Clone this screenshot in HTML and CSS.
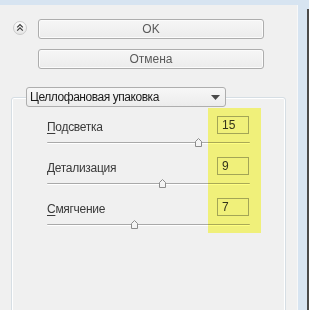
FILE: index.html
```html
<!DOCTYPE html>
<html lang="ru">
<head>
<meta charset="utf-8">
<link rel="stylesheet" href="styles.css">
</head>
<body>
<div class="window">
  <div class="panel">
    <div class="top">
      <div class="collapse">
        <svg width="14" height="14" viewBox="0 0 14 14">
          <defs>
            <linearGradient id="cg" x1="0" y1="0" x2="0" y2="1">
              <stop offset="0" stop-color="#ffffff"/>
              <stop offset="1" stop-color="#e4e4e4"/>
            </linearGradient>
          </defs>
          <circle cx="7" cy="7" r="6.5" fill="url(#cg)" stroke="#cacaca"/>
          <polyline points="4.2,6.3 7,3.5 9.8,6.3" fill="none" stroke="#3a3a3a" stroke-width="1.2"/>
          <polyline points="4.2,9.6 7,6.8 9.8,9.6" fill="none" stroke="#3a3a3a" stroke-width="1.2"/>
        </svg>
      </div>
      <div class="buttons">
        <div class="btn">OK</div>
        <div class="btn">Отмена</div>
      </div>
    </div>
    <fieldset class="group">
      <legend class="legend">
        <div class="combo">
          <span class="combo-text">Целлофановая упаковка</span>
          <svg class="combo-arrow" width="9" height="5" viewBox="0 0 9 5"><polygon points="0,0 9,0 4.5,5" fill="#4a4a4a"/></svg>
        </div>
      </legend>
      <div class="sliders">
        <div class="row">
          <div class="head">
            <span class="label"><u>П</u>одсветка</span>
            <span class="num">15</span>
          </div>
          <div class="slider">
            <div class="line"></div>
            <svg class="thumb" style="left: 74.4%" width="7" height="9" viewBox="0 0 7 9"><path d="M3.5 0.5 L6.5 3.5 L6.5 8.5 L0.5 8.5 L0.5 3.5 Z" fill="#f4f4f4" stroke="#8c8c8c"/></svg>
          </div>
        </div>
        <div class="row">
          <div class="head">
            <span class="label"><u>Д</u>етализация</span>
            <span class="num">9</span>
          </div>
          <div class="slider">
            <div class="line"></div>
            <svg class="thumb" style="left: 56.7%" width="7" height="9" viewBox="0 0 7 9"><path d="M3.5 0.5 L6.5 3.5 L6.5 8.5 L0.5 8.5 L0.5 3.5 Z" fill="#f4f4f4" stroke="#8c8c8c"/></svg>
          </div>
        </div>
        <div class="row">
          <div class="head">
            <span class="label"><u>С</u>мягчение</span>
            <span class="num">7</span>
          </div>
          <div class="slider">
            <div class="line"></div>
            <svg class="thumb" style="left: 42.9%" width="7" height="9" viewBox="0 0 7 9"><path d="M3.5 0.5 L6.5 3.5 L6.5 8.5 L0.5 8.5 L0.5 3.5 Z" fill="#f4f4f4" stroke="#8c8c8c"/></svg>
          </div>
        </div>
      </div>
    </fieldset>
  </div>
  <div class="frame"></div>
  <div class="edge"></div>
  <div class="highlight"></div>
</div>
</body>
</html>
```

FILE: styles.css
```css
html, body {
  margin: 0;
  padding: 0;
}

body {
  font-family: "Liberation Sans", Arial, sans-serif;
  font-size: 12px;
  color: #222;
}

.window {
  position: relative;
  display: flex;
  width: 309px;
  height: 310px;
  box-sizing: border-box;
  padding-top: 5px;
  background: #d7e4f1;
  overflow: hidden;
}

.panel {
  width: 298px;
  flex: none;
  box-sizing: border-box;
  padding: 14px 0 0 11px;
  background: #f0f0f0;
  box-shadow: inset -1px 0 0 #f8f8f8;
  overflow: hidden;
}

.frame {
  width: 9px;
  flex: none;
}

.edge {
  width: 2px;
  flex: none;
  margin-top: 4px;
  background: #4a4a4a;
}

.top {
  display: flex;
}

.collapse {
  width: 14px;
  height: 14px;
  margin: 2px 0 0 2px;
  flex: none;
}

.collapse svg {
  display: block;
}

.buttons {
  display: flex;
  flex-direction: column;
  gap: 10px;
  margin-left: 11px;
  width: 226px;
}

.btn {
  height: 20px;
  box-sizing: border-box;
  border: 1px solid #adadad;
  border-radius: 3px;
  background: linear-gradient(#f6f6f6, #ececec);
  box-shadow: inset 0 0 0 1px #fbfbfb;
  display: flex;
  align-items: center;
  justify-content: center;
  color: #5a5a5a;
  font-size: 12px;
}

.group {
  margin: 18px 0 0 0;
  padding: 0;
  width: 275px;
  height: 240px;
  box-sizing: border-box;
  border: 1px solid #d6dee4;
  border-radius: 3px;
  box-shadow: inset 0 0 0 1px #ffffff;
  min-width: 0;
}

.legend {
  padding: 0;
  margin-left: 14px;
}

.combo {
  width: 200px;
  height: 20px;
  box-sizing: border-box;
  border: 1px solid #aeaeae;
  border-radius: 3px;
  background: linear-gradient(#f7f7f7, #ececec);
  display: flex;
  align-items: center;
  justify-content: space-between;
  padding: 0 5px 0 3px;
}

.combo-text {
  color: #1a1a1a;
  white-space: nowrap;
  letter-spacing: -0.45px;
}

.combo-arrow {
  display: block;
}

.sliders {
  padding: 9px 0 0 35px;
  width: 203px;
}

.row {
  height: 41px;
}

.head {
  display: flex;
  justify-content: space-between;
  align-items: center;
  height: 18px;
}

.label {
  color: #3a3a3a;
  margin-top: 3px;
  line-height: 14px;
  letter-spacing: -0.3px;
}

.label u {
  text-decoration-thickness: 1px;
  text-underline-offset: 2px;
}

.num {
  width: 32px;
  height: 18px;
  box-sizing: border-box;
  margin-right: 1px;
  border: 1px solid #a3a5a8;
  background: transparent;
  padding-left: 4px;
  line-height: 16px;
  color: #333;
}

.slider {
  position: relative;
  height: 23px;
}

.line {
  position: relative;
  top: 8px;
  height: 0;
  border-top: 1px solid #a9a9a9;
  border-bottom: 1px solid #ffffff;
  border-radius: 1px;
}

.thumb {
  position: absolute;
  top: 4px;
  margin-left: -3px;
  display: block;
}

.highlight {
  position: absolute;
  left: 208px;
  top: 108px;
  width: 53px;
  height: 125px;
  background: #ffff82;
  mix-blend-mode: multiply;
}
```
